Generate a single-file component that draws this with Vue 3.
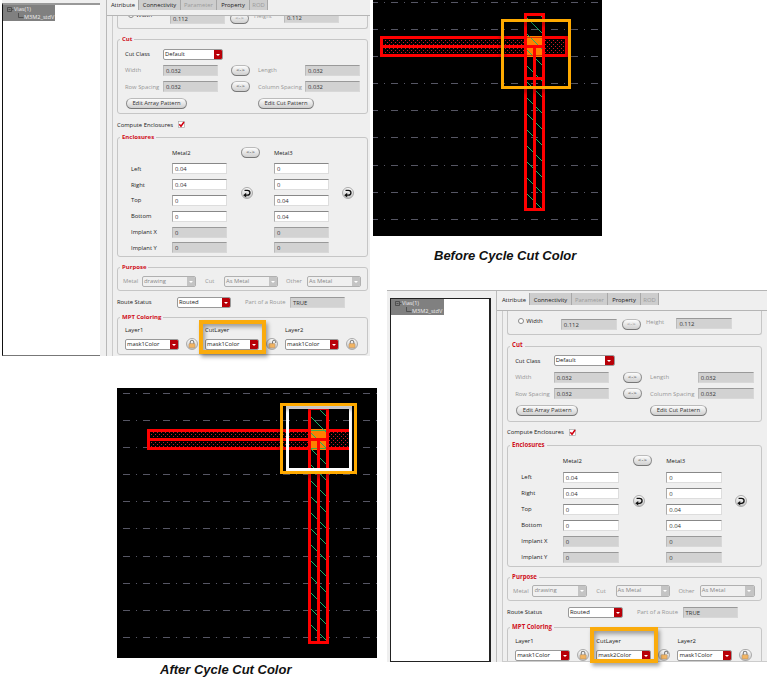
<script setup>
const tabs = [
  { name: 'Attribute', active: true },
  { name: 'Connectivity' },
  { name: 'Parameter', off: true },
  { name: 'Property' },
  { name: 'ROD', off: true }
]
const enclosures = [
  { name: 'Left', a: '0.04', b: '0' },
  { name: 'Right', a: '0.04', b: '0' },
  { name: 'Top', a: '0', b: '0.04' },
  { name: 'Bottom', a: '0', b: '0.04' },
  { name: 'Implant X', a: '0', b: '0', off: true },
  { name: 'Implant Y', a: '0', b: '0', off: true }
]
const purposes = [
  { name: 'Metal', value: 'drawing' },
  { name: 'Cut', value: 'As Metal' },
  { name: 'Other', value: 'As Metal' }
]
const layers = (cut) => [
  { name: 'Layer1', mask: 'mask1Color' },
  { name: 'CutLayer', mask: cut, open: true },
  { name: 'Layer2', mask: 'mask1Color' }
]

const before = {
  kind: 'before', w: 229, h: 236, dash: -2,
  grid: [2, 29, 56, 83, 110, 137, 165, 192, 219],
  hx: 7, hy: 36, hEnd: 195, vx: 151, top: 13, bottom: 211, hatch: 2
}
const after = {
  kind: 'after', w: 260, h: 270, dash: -14,
  grid: [5, 32, 59, 86, 113, 140, 168, 195, 222, 249],
  hx: 30, hy: 41, hEnd: 235, vx: 191, top: 19, bottom: 256, hatch: 13
}
const columns = [
  [
    { type: 'panel', kind: 'first', layers: layers('mask1Color') },
    { type: 'view', ...after, caption: 'After Cycle Cut Color' }
  ],
  [
    { type: 'view', ...before, caption: 'Before Cycle Cut Color' },
    { type: 'panel', kind: 'second', layers: layers('mask2Color') }
  ]
]
const hatches = (v) => {
  let d = ''
  for (let y = v.hatch - 16; y < v.bottom; y += 16) {
    for (let i = 0; i < 15; i++) d += `M${v.vx + 3 + i} ${y + i}h1v1h-1z`
  }
  return d
}
</script>

<template>
  <main class="page">
    <div v-for="(col, c) in columns" :key="c" class="col">
      <template v-for="(item, n) in col" :key="n">
        <section v-if="item.type === 'panel'" class="panel" :class="item.kind">
          <div class="tree">
            <div class="node">
              <svg class="twig" viewBox="0 0 52 16">
                <path d="M4.5 2.5h4v4h-4zM5.5 4.5h2M9 4.5h1.5M15.5 8v4.5h5" />
              </svg>
              <span>Vias(1)</span>
              <span class="leaf">M3M2_stdV</span>
            </div>
          </div>
          <div class="editor">
            <nav class="tabs">
              <span v-for="t in tabs" :key="t.name" :class="{ active: t.active, off: t.off }">{{ t.name }}</span>
            </nav>
            <div class="viewport">
              <div class="form">
                <div class="box size">
                  <span class="radio"></span><span>Width</span>
                  <span class="field off">0.112</span>
                  <span class="pill faded">&lt;-&gt;</span>
                  <span class="dim">Height</span>
                  <span class="field off">0.112</span>
                </div>

                <div class="box cut">
                  <b class="legend">Cut</b>
                  <div class="cutrow">
                    <span>Cut Class</span>
                    <span class="select wide">Default<i></i></span>
                  </div>
                  <div class="cutrow">
                    <span class="dim">Width</span><span class="field off">0.032</span>
                    <span class="pill">&lt;-&gt;</span>
                    <span class="dim second">Length</span><span class="field off">0.032</span>
                  </div>
                  <div class="cutrow">
                    <span class="dim">Row Spacing</span><span class="field off">0.032</span>
                    <span class="pill">&lt;-&gt;</span>
                    <span class="dim second">Column Spacing</span><span class="field off">0.032</span>
                  </div>
                  <div class="buttons">
                    <span class="pill">Edit Array Pattern</span>
                    <span class="pill">Edit Cut Pattern</span>
                  </div>
                </div>

                <div class="compute">
                  <span>Compute Enclosures</span>
                  <svg class="check" viewBox="0 0 7 7">
                    <rect x=".5" y=".5" width="6" height="6" />
                    <path d="M1.3 3.2l1.7 2L6 1" />
                  </svg>
                </div>

                <div class="box enc">
                  <b class="legend">Enclosures</b>
                  <span class="corner"></span>
                  <span class="m2">Metal2</span>
                  <span class="pill swap">&lt;-&gt;</span>
                  <span class="m3">Metal3</span>
                  <template v-for="e in enclosures" :key="e.name">
                    <span class="name">{{ e.name }}</span>
                    <span class="field f2" :class="{ off: e.off }">{{ e.a }}</span>
                    <span class="field f3" :class="{ off: e.off }">{{ e.b }}</span>
                  </template>
                  <span v-for="k in 2" :key="k" class="round" :class="'turn' + k">
                    <svg viewBox="0 0 12 12"><path d="M3.5 3.3h3a2.4 2.4 0 0 1 0 4.9H4" /><path class="tip" d="M5.2 5.8v4.6L2.2 8.2z" /></svg>
                  </span>
                </div>

                <div class="box purpose">
                  <b class="legend">Purpose</b>
                  <template v-for="p in purposes" :key="p.name">
                    <span class="dim">{{ p.name }}</span>
                    <span class="select gray">{{ p.value }}<i></i></span>
                  </template>
                </div>

                <div class="route">
                  <span>Route Status</span>
                  <span class="select">Routed<i></i></span>
                  <span class="dim part">Part of a Route</span>
                  <span class="field off">TRUE</span>
                </div>

                <div class="box mpt">
                  <b class="legend">MPT Coloring</b>
                  <div v-for="l in item.layers" :key="l.name" class="layer">
                    <span class="title">{{ l.name }}</span>
                    <span class="select">{{ l.mask }}<i></i></span>
                    <span class="round">
                      <svg viewBox="0 0 12 12">
                        <path class="shackle" :d="l.open ? 'M6.5 6V3.8a1.6 1.6 0 0 1 3.2 0V5' : 'M4.2 6V4a1.8 1.8 0 0 1 3.6 0v2'" />
                        <rect class="lock" x="3" y="5.6" width="6" height="4.2" rx=".6" />
                      </svg>
                    </span>
                  </div>
                </div>
              </div>
            </div>
          </div>
          <div class="marker"></div>
        </section>

        <figure v-else :class="item.kind">
          <svg class="cad" :width="item.w" :height="item.h" shape-rendering="crispEdges">
            <defs>
              <pattern :id="'dots-' + item.kind" width="4" height="4" patternUnits="userSpaceOnUse">
                <path d="M0 0h1v1h-1zM2 2h1v1h-1z" fill="#d01822" />
              </pattern>
            </defs>
            <rect width="100%" height="100%" fill="#000" />
            <path v-for="g in item.grid" :key="g" class="grid" :d="`M${item.dash} ${g + 0.5}H${item.w}`" />
            <!-- horizontal wire -->
            <rect :x="item.hx" :y="item.hy" :width="item.hEnd - item.hx" height="21" fill="#000" />
            <rect :x="item.hx + 4" :y="item.hy + 3" :width="item.hEnd - item.hx - 7" height="15" :fill="`url(#dots-${item.kind})`" />
            <rect class="wire" :x="item.hx + 1.5" :y="item.hy + 1.5" :width="item.hEnd - item.hx - 3" height="18" />
            <!-- vertical wire -->
            <rect :x="item.vx" :y="item.top" width="21" :height="item.bottom - item.top" fill="#000" />
            <path v-for="g in item.grid.filter((y) => y > item.top && y < item.bottom)" :key="'v' + g" class="grid" :d="`M${item.vx + 7} ${g + 0.5}h7`" stroke-dasharray="none" />
            <rect :x="item.vx + 3" :y="item.hy" width="15" height="21" fill="#ff8000" />
            <svg :y="item.top + 3" :height="item.bottom - item.top - 6" :width="item.w" :viewBox="`0 ${item.top + 3} ${item.w} ${item.bottom - item.top - 6}`">
              <path :d="hatches(item)" fill="#17b56a" />
            </svg>
            <path :d="`M${item.vx + 3} ${item.hy + 1.5}h15M${item.vx + 3} ${item.hy + 19.5}h15`" :stroke="item.kind === 'after' ? '#3fae4a' : '#d83000'" />
            <rect class="wire" :x="item.vx + 1.5" :y="item.top + 1.5" width="18" :height="item.bottom - item.top - 3" />
            <path class="wire" :d="`M${item.hx} ${item.hy + 10.5}H${item.vx + 21}M${item.vx + 10.5} ${item.hy + 9}V${item.bottom}`" />
            <template v-if="item.kind === 'before'">
              <path class="wire" d="M151 78.5h21" />
              <rect class="outline" x="129.5" y="20.5" width="67" height="67" />
            </template>
            <template v-else>
              <rect class="select-box" x="170.5" y="19.5" width="63" height="62" />
              <rect class="outline" x="164.5" y="16.5" width="74" height="68" />
            </template>
          </svg>
          <figcaption>{{ item.caption }}</figcaption>
        </figure>
      </template>
    </div>
  </main>
</template>

<style>
body { margin: 0; background: #fff; overflow: hidden; }
</style>

<style scoped>
* { box-sizing: border-box; }
.page { display: flex; width: 767px; height: 684px; overflow: hidden; font-family: "Open Sans", "Noto Sans", sans-serif; }
.col { display: flex; flex-direction: column; flex: none; width: 373px; }
.col + .col { width: 394px; }
figure { margin: 0; }
figure.after { margin: 32px 0 0 117px; }
.cad { display: block; }
figcaption { font: italic bold 13px/16px "Liberation Sans", Arial, sans-serif; color: #111; white-space: nowrap; }
.before figcaption { margin: 12px 0 0 61px; }
.after figcaption { margin: 4px 0 0 43px; }
.grid { stroke: #565664; stroke-dasharray: 7 6 1 6; fill: none; }
.wire { stroke: #f00; stroke-width: 3; fill: none; }
.outline { stroke: #fa0; stroke-width: 3; fill: none; filter: drop-shadow(0 3px 2px rgba(0, 0, 0, .45)); }
.select-box { stroke: #fff; stroke-width: 3; fill: none; }

.panel { position: relative; display: flex; background: #efefef; font-size: 5.85px; line-height: 8px; color: #1a1a1a; white-space: nowrap; }
.panel.first { width: 368px; height: 356px; margin-left: 2px; }
.panel.second { width: 380px; height: 372px; margin: 26px 0 0 14px; border-top: 1px solid #b5b5b5; }
.tree { flex: none; background: #fff; }
.first .tree { width: 98px; margin-top: 3px; border-left: 1px solid #111; border-top: 2px solid #999; border-bottom: 1px solid #777; }
.second .tree { width: 101px; margin: 7px 0 0 3px; border: 1px solid #222; border-right-width: 2px; }
.node { position: relative; display: flex; flex-direction: column; width: 52px; height: 16px; padding-left: 11px; background: #808080; color: #eee; line-height: 8px; font-size: 5.6px; }
.second .node { width: 53px; }
.node .leaf { padding-left: 10px; }
.twig { position: absolute; left: 0; top: 0; width: 52px; height: 16px; fill: none; stroke: #444; stroke-width: .8; }
.editor { flex: 1; min-width: 0; display: flex; flex-direction: column; }
.first .editor { margin-left: 6px; border-left: 1px solid #b8b8b8; }
.second .editor { margin-left: 5px; border-left: 1px solid #bbb; }

.tabs { display: flex; flex: none; border-bottom: 1px solid #b5b5b5; line-height: 10px; padding-left: 1px; }
.first .tabs { height: 16px; }
.second .tabs { height: 18px; margin: 2px 0 0; }
.tabs span { height: 10px; width: 36px; text-align: center; background: #cdcdcd; border-right: 1px solid #a8a8a8; }
.second .tabs span { height: 12px; line-height: 14px; }
.tabs span:nth-child(1) { width: 31px; }
.tabs span:nth-child(2) { width: 42px; }
.tabs span:nth-child(4) { width: 33px; }
.tabs span:nth-child(5) { width: 18px; }
.second .tabs { padding-left: 2px; }
.tabs .active { background: #efefef; }
.tabs .off { color: #9b9b9b; }

.viewport { flex: 1; overflow: hidden; margin-left: 5px; border-left: 1px solid #ccc; }
.second .viewport { border-bottom: 1px solid #ccc; }
.form { width: 251px; margin: -13px 0 0 4px; }
.second .form { zoom: 1.0145; margin-top: -2px; }
.box { position: relative; border: 1px solid #c6c6c6; border-radius: 3px; }
.legend { position: absolute; left: 2px; top: -5px; padding: 0 2px; background: #efefef; color: #d0101c; font-size: 6px; line-height: 8px; }
.dim { color: #969696; }
.field { display: block; width: 55px; height: 11px; padding-left: 2px; line-height: 10px; background: #fff; border: 1px solid #ddd; border-top-color: #888; border-left-color: #aaa; color: #333; }
.field.off { background: #d2d2d2; border-color: #999 #d8d8d8 #d8d8d8 #bbb; }
.select { display: flex; width: 54px; height: 11px; padding-left: 1px; line-height: 9px; background: #fff; border: 1px solid #999; border-radius: 2px; color: #222; justify-content: space-between; overflow: hidden; }
.select.wide { width: 60px; }
.select i { position: relative; width: 8px; height: 9px; background: #b80008; }
.select i::after { content: ""; position: absolute; left: 2px; top: 4px; border: 2px solid transparent; border-top-color: #fff; border-bottom: 0; }
.select.gray { background: #f0f0f0; color: #888; border-color: #b0b0b0; }
.select.gray i { background: #c4c4c4; }
.pill { display: block; width: 19px; height: 11px; border: 1px solid #8d8d8d; border-top-color: #bbb; border-bottom-color: #777; border-radius: 6px; background: linear-gradient(#fcfcfc, #cfcfcf); text-align: center; line-height: 9px; color: #333; }
.pill.faded { color: #888; }
.round { width: 12px; height: 12px; border: 1px solid #aaa; border-radius: 50%; background: linear-gradient(#fff, #c4c4c4); }
.round svg { display: block; width: 12px; height: 12px; margin: -1px; fill: none; stroke: #111; stroke-width: 1.3; }
.round .tip { fill: #111; stroke: none; }
.round .lock { fill: #f3b562; stroke: #a8896a; stroke-width: .5; }
.round .shackle { stroke: #777; stroke-width: 1; }

.size { display: grid; grid-template-columns: 8px 32px 55px 19px 28px 55px; height: 26px; padding: 8px 0 0 10px; border-top: 0; border-radius: 0 0 3px 3px; }
.size .field { margin-top: 2px; margin-left: 2px; }
.size .pill { margin-left: 7px; margin-top: 2px; }
.size .dim { margin-left: 12px; margin-top: 1px; }
.size .dim + .field { margin-left: 14px; margin-top: 1px; }
.radio { width: 6px; height: 6px; margin-top: 1px; border: 1px solid #888; border-radius: 50%; background: #fff; }
.cut { height: 75px; margin-top: 10px; padding: 6px 0 0 7px; }
.cutrow { display: grid; grid-template-columns: 38px 68px 19px 55px 55px; height: 16.3px; align-items: center; }
.cutrow .second { padding-left: 8px; }
.buttons { display: flex; gap: 71px; margin: 3px 0 0 1px; }
.buttons .pill { width: 61px; }
.buttons .pill + .pill { width: 56px; }
.compute { display: flex; align-items: center; height: 21px; gap: 6px; }
.compute span { width: 55px; }
.check { width: 7px; height: 7px; fill: #fff; stroke: #aaa; stroke-width: .7; }
.check path { fill: none; stroke: #d00010; stroke-width: 1.5; }
.enc { display: grid; grid-template-columns: 41px 69px 18px 15px 68px 12px; grid-template-rows: 15px repeat(6, 15.8px); height: 120px; padding: 8px 0 0 13px; align-items: center; margin-top: 2px; }
.corner { grid-area: 1 / 1; }
.m2 { grid-area: 1 / 2; margin-top: -2px; }
.swap { grid-area: 1 / 3; width: 19px; margin-top: -2px; }
.m3 { grid-area: 1 / 5; margin-top: -2px; }
.name { grid-column: 1; }
.f2 { grid-column: 2; }
.f3 { grid-column: 5; }
.turn1 { grid-area: 3 / 3 / 5 / 4; }
.turn2 { grid-area: 3 / 6 / 5 / 7; }
.purpose { display: grid; grid-template-columns: 19px 63px 19px 62px 21px 54px; height: 24px; margin-top: 10px; padding: 4px 0 0 5px; align-items: center; }
.route { display: grid; grid-template-columns: 60px 68px 45px 55px; height: 22px; align-items: center; }
.mpt { display: flex; height: 38px; margin-top: 4px; padding: 8px 0 0 7px; }
.layer { display: grid; grid-template-columns: 61px 12px; grid-template-rows: 12px 12px; width: 80px; flex: none; }
.layer .title { grid-column: 1 / 3; }
.layer .select { margin-top: 1px; }
.marker { position: absolute; border: 4px solid #faab0c; box-shadow: 2px 3px 4px rgba(0, 0, 0, .35), inset 2px 3px 4px rgba(0, 0, 0, .35); }
.first .marker { left: 197px; top: 320px; width: 67px; height: 34px; }
.second .marker { left: 203px; top: 336px; width: 68px; height: 36px; }
</style>
